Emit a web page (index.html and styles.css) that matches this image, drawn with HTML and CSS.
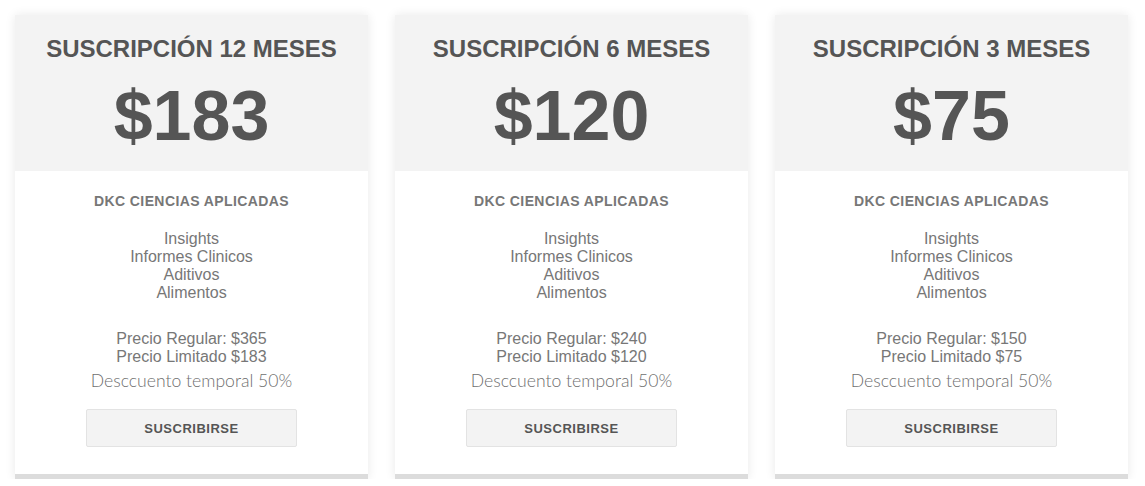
FILE: index.html
```
<!DOCTYPE html>
<html lang="es">
<head>
<meta charset="utf-8">
<title>Suscripciones</title>
<link rel="stylesheet" href="styles.css">
</head>
<body>
<div class="plans">
  <div class="card">
    <div class="card-head">
      <h2 class="plan-title">SUSCRIPCIÓN 12 MESES</h2>
      <div class="plan-price">$183</div>
    </div>
    <div class="card-body">
      <div class="brand">DKC CIENCIAS APLICADAS</div>
      <ul class="features">
        <li>Insights</li>
        <li>Informes Clinicos</li>
        <li>Aditivos</li>
        <li>Alimentos</li>
      </ul>
      <div class="prices">
        <div>Precio Regular: $365</div>
        <div>Precio Limitado $183</div>
      </div>
      <div class="discount">Desccuento temporal 50%</div>
      <button class="btn">SUSCRIBIRSE</button>
    </div>
  </div>
  <div class="card">
    <div class="card-head">
      <h2 class="plan-title">SUSCRIPCIÓN 6 MESES</h2>
      <div class="plan-price">$120</div>
    </div>
    <div class="card-body">
      <div class="brand">DKC CIENCIAS APLICADAS</div>
      <ul class="features">
        <li>Insights</li>
        <li>Informes Clinicos</li>
        <li>Aditivos</li>
        <li>Alimentos</li>
      </ul>
      <div class="prices">
        <div>Precio Regular: $240</div>
        <div>Precio Limitado $120</div>
      </div>
      <div class="discount">Desccuento temporal 50%</div>
      <button class="btn">SUSCRIBIRSE</button>
    </div>
  </div>
  <div class="card">
    <div class="card-head">
      <h2 class="plan-title">SUSCRIPCIÓN 3 MESES</h2>
      <div class="plan-price">$75</div>
    </div>
    <div class="card-body">
      <div class="brand">DKC CIENCIAS APLICADAS</div>
      <ul class="features">
        <li>Insights</li>
        <li>Informes Clinicos</li>
        <li>Aditivos</li>
        <li>Alimentos</li>
      </ul>
      <div class="prices">
        <div>Precio Regular: $150</div>
        <div>Precio Limitado $75</div>
      </div>
      <div class="discount">Desccuento temporal 50%</div>
      <button class="btn">SUSCRIBIRSE</button>
    </div>
  </div>
</div>
</body>
</html>
```
FILE: styles.css
```
html, body {
  margin: 0;
  padding: 0;
  background: #ffffff;
}
body {
  font-family: "Liberation Sans", Arial, sans-serif;
  color: #777;
}
.plans {
  display: flex;
  gap: 27px;
  padding: 15px 0 0 15px;
}
.card {
  width: 353px;
  background: #fff;
  box-shadow: 0 0 10px rgba(0, 0, 0, 0.09);
  border-bottom: 5px solid #dcdcdc;
  text-align: center;
}
.card-head {
  background: #f3f3f3;
  padding: 20px 0 20px;
}
.plan-title {
  margin: 0;
  font-size: 24px;
  line-height: 28px;
  font-weight: bold;
  color: #555;
}
.plan-price {
  margin-top: 18px;
  font-size: 70px;
  line-height: 70px;
  font-weight: bold;
  color: #555;
}
.card-body {
  padding: 21px 0 27px;
}
.brand {
  font-size: 14px;
  line-height: 18px;
  font-weight: bold;
  letter-spacing: 0.4px;
  color: #777;
}
.features {
  list-style: none;
  margin: 20px 0 0;
  padding: 0;
  font-size: 16px;
  line-height: 18px;
  color: #777;
}
.prices {
  margin-top: 28px;
  font-size: 16px;
  line-height: 18px;
  color: #777;
}
.discount {
  margin-top: 4px;
  font-family: Lato, "Liberation Sans", sans-serif;
  font-weight: 300;
  font-size: 17.6px;
  line-height: 22px;
  color: #6f6f6f;
}
.btn {
  display: block;
  margin: 17px auto 0;
  width: 211px;
  height: 38px;
  background: #f3f3f3;
  border: 1px solid #e3e3e3;
  border-radius: 2px;
  font-family: "Liberation Sans", Arial, sans-serif;
  font-size: 13px;
  font-weight: bold;
  letter-spacing: 0.5px;
  color: #555;
  padding: 0;
}
```
